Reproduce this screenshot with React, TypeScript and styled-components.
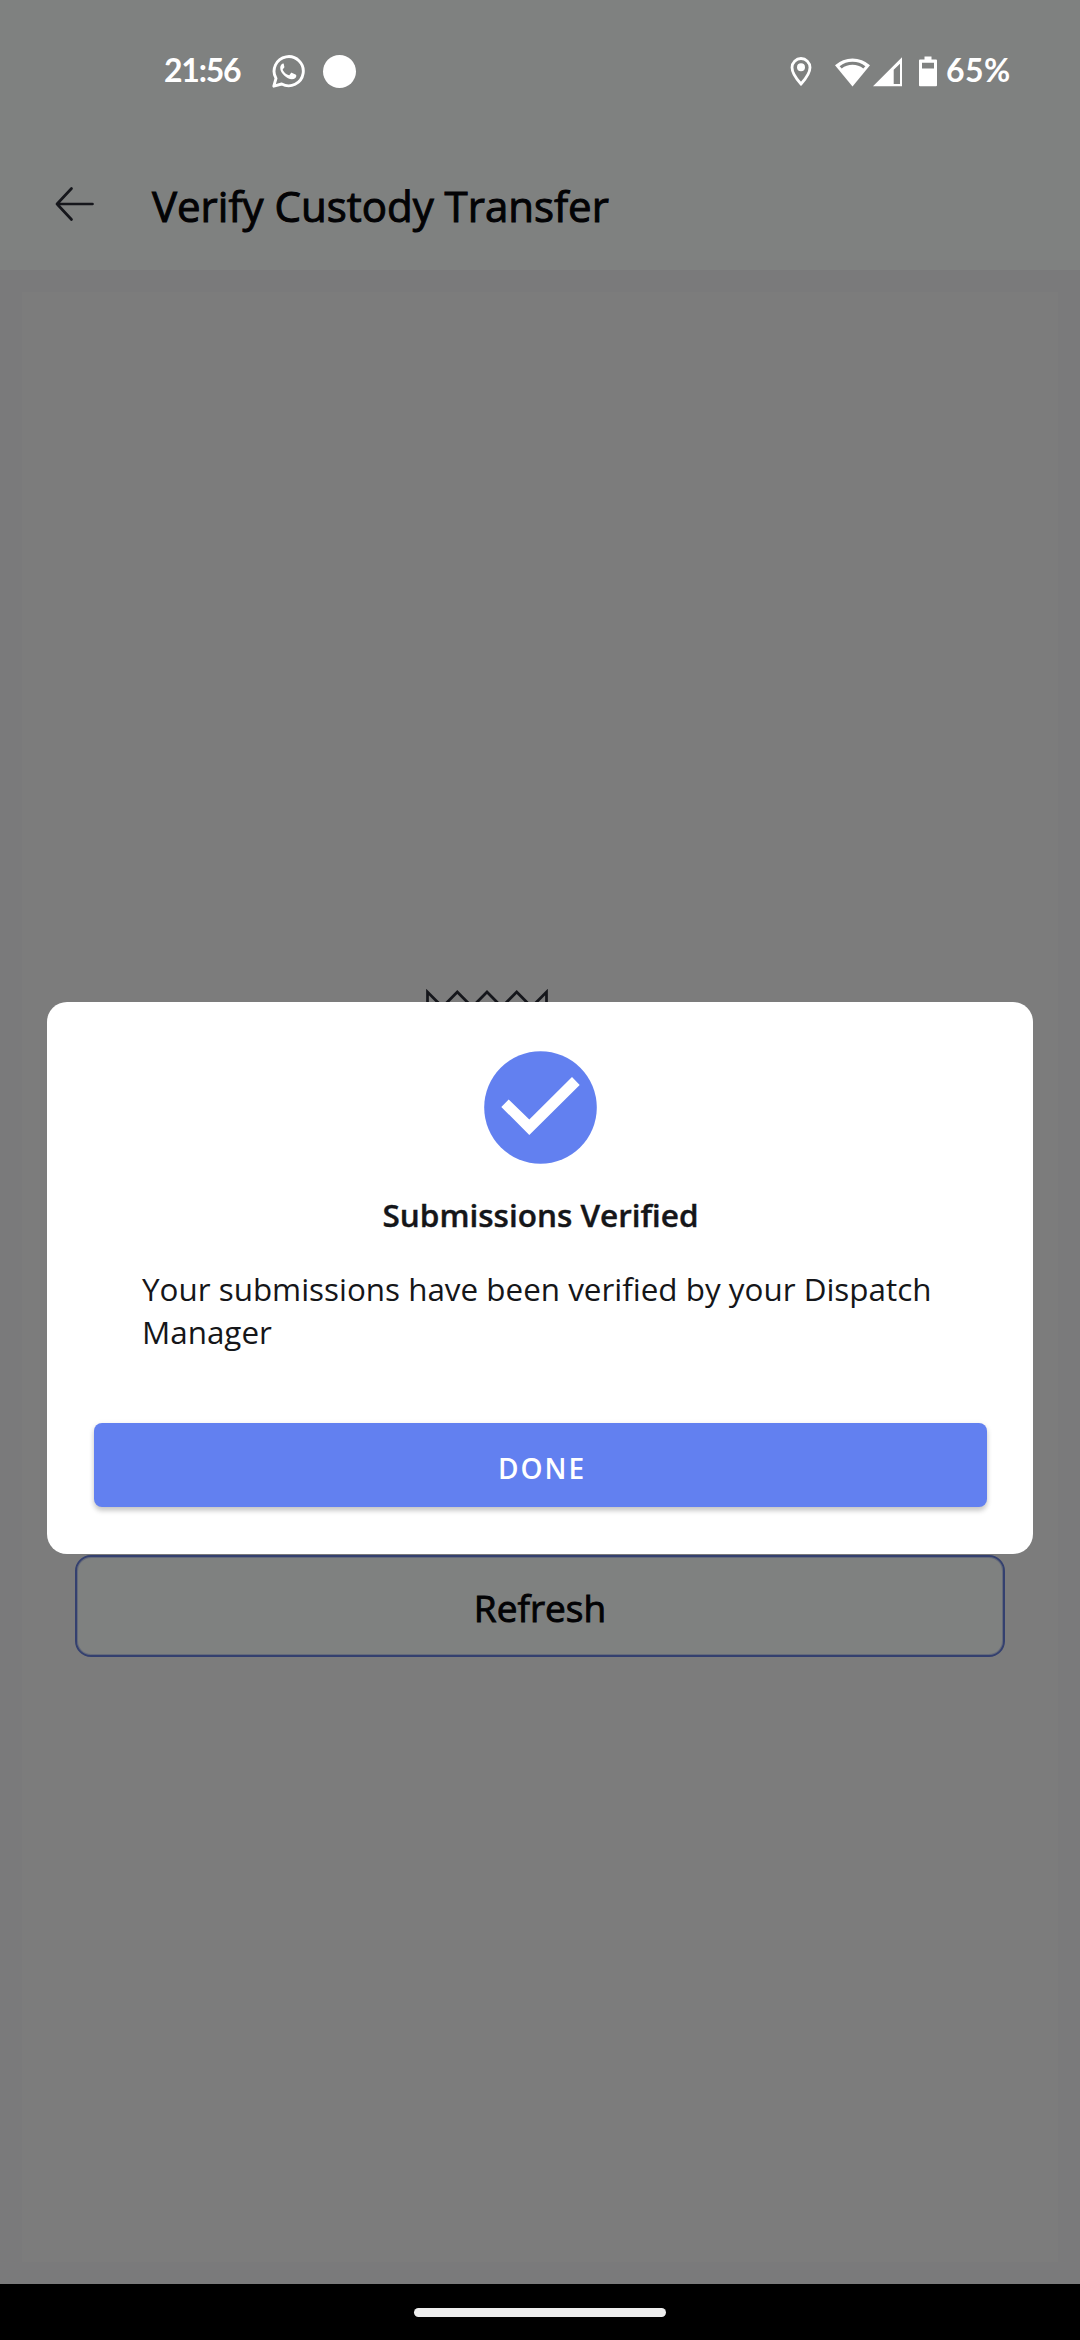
import React from "react";
import styled, { createGlobalStyle } from "styled-components";

const GlobalStyle = createGlobalStyle`
  * { box-sizing: border-box; }
  body { margin: 0; background: #000; }
`;

const Screen = styled.div`
  position: relative;
  width: 1080px;
  height: 2340px;
  display: flex;
  flex-direction: column;
  overflow: hidden;
  background: #7f8180;
  font-family: "Open Sans", Roboto, sans-serif;
  color: #151619;
`;

const StatusBar = styled.div`
  height: 142px;
  display: flex;
  justify-content: space-between;
  align-items: center;
  padding: 0 68px 0 164px;
`;

const StatusGroup = styled.div<{ $gap: number }>`
  display: flex;
  align-items: center;
  gap: ${(p) => p.$gap}px;
  color: #fff;
  svg { display: block; }
`;

const StatusText = styled.span<{ $spacing: number; $width: number; $inset?: number }>`
  width: ${(p) => p.$width}px;
  padding: 0 0 2px ${(p) => p.$inset ?? 0}px;
  font-family: Lato, sans-serif;
  font-weight: 700;
  font-size: 32px;
  line-height: 36px;
  letter-spacing: ${(p) => p.$spacing}px;
  white-space: nowrap;
`;

const Dot = styled.span`
  width: 33px;
  height: 33px;
  border-radius: 50%;
  background: #fff;
`;

const Header = styled.header`
  height: 128px;
  display: flex;
  align-items: flex-start;
  padding: 37px 56px 0 55px;
  gap: 57px;
`;

const BackIcon = styled.svg`
  margin-top: 7px;
  flex: none;
`;

const Title = styled.h1`
  margin: 0;
  font-size: 42px;
  line-height: 53px;
  font-weight: 400;
  -webkit-text-stroke: 1px #030305;
  color: #030305;
  white-space: nowrap;
`;

const Body = styled.main`
  flex: 1;
  border: 22px solid #7a7a7b;
  background: #7c7c7c;
  display: flex;
  flex-direction: column;
  padding: 697px 53px 0;
`;

const ReceiptIcon = styled.svg`
  display: block;
  margin-left: 350px;
`;

const RefreshButton = styled.button`
  margin-top: 406px;
  height: 102px;
  border: 2px solid #34406f;
  box-shadow: inset 0 0 0 1px rgba(52, 64, 111, 0.35);
  border-radius: 16px;
  background: #7f8180;
  font: 400 37px/48px "Open Sans", Roboto, sans-serif;
  -webkit-text-stroke: 0.9px #030305;
  color: #030305;
  padding: 4px 0 0;
`;

const NavBar = styled.div`
  height: 56px;
  background: #000;
  display: flex;
  justify-content: center;
  align-items: center;
`;

const Pill = styled.span`
  width: 252px;
  height: 9px;
  border-radius: 5px;
  background: #eeeeee;
`;

const Overlay = styled.div`
  position: absolute;
  inset: 0 0 56px;
  display: flex;
  align-items: flex-start;
  padding: 1002px 47px 0;
`;

const Dialog = styled.section`
  flex: 1;
  height: 552px;
  border-radius: 20px;
  background: #fff;
  display: flex;
  flex-direction: column;
  align-items: center;
  padding: 49px 46px 47px 47px;
`;

const DialogTitle = styled.h2`
  margin: 30px 0 0;
  font-size: 31.5px;
  line-height: 42px;
  font-weight: 600;
  -webkit-text-stroke: 0.4px #151619;
  white-space: nowrap;
`;

const DialogText = styled.p`
  margin: 31px 0 0;
  align-self: stretch;
  padding: 0 0 0 48px;
  font-size: 31.4px;
  line-height: 43px;
  white-space: pre;
`;

const DoneButton = styled.button`
  margin-top: auto;
  align-self: stretch;
  height: 84px;
  border: 0;
  border-radius: 8px;
  background: #6280f0;
  box-shadow: 0 4px 5px rgba(0, 0, 0, 0.18), 0 1px 6px rgba(0, 0, 0, 0.08);
  color: #fff;
  font: 600 28px/36px "Open Sans", Roboto, sans-serif;
  letter-spacing: 2px;
  padding: 5px 0 0 3px;
`;

export default function App() {
  return (
    <>
      <GlobalStyle />
      <Screen>
        <StatusBar>
          <StatusGroup $gap={18}>
            <StatusText $width={90} $spacing={-1.2}>21:56</StatusText>
            <svg width="33" height="33" viewBox="0 0 33 33" fill="none">
              <path d="M1.8 31.2 4 23.4A14.6 14.6 0 1 1 9.7 29Z" stroke="#fff" strokeWidth="2.9" strokeLinejoin="round" />
              <path d="M11.4 9c-1.500 0-3.200 1.600-3.200 4.300C8.200 19 15 24.700 19.900 24.700c2.600 0 4.400-1.700 4.400-3.300 0-.8-.2-1.100-.8-1.400l-3.300-1.600c-.6-.3-1-.2-1.400.3l-1.300 1.700c-.3.400-.7.400-1.200.200-2.300-1-4.200-2.700-5.400-4.900-.3-.5-.2-.9.100-1.200l1.100-1.300c.3-.4.400-.8.200-1.300L11.700 9.300c-.1-.2-.2-.3-.3-.3Z" fill="#fff" transform="translate(0 -.5)" />
            </svg>
            <Dot />
          </StatusGroup>
          <StatusGroup $gap={0}>
            <svg width="147" height="31" viewBox="0 0 147 31">
              <path d="M11 2.500A9 9 0 0 0 2 11.500C2 18 11 28 11 28S20 18 20 11.500A9 9 0 0 0 11 2.500Z" fill="none" stroke="#fff" strokeWidth="2.8" />
              <circle cx="11" cy="11.300" r="4" fill="#fff" />
              <path d="M45 9.200A26 26 0 0 1 80 9.200L62.500 30.500Z" fill="#fff" />
              <path d="M49.600 10.200A21 21 0 0 1 75.400 10.200L73.300 12.600A17.500 17.500 0 0 0 51.700 12.600Z" fill="#7f8180" />
              <path d="M112 1.200V30.200H83ZM103.700 13.800V28H110V7.800Z" fill="#fff" fillRule="evenodd" />
              <path d="M134.500.5h7v3H146a1 1 0 0 1 1 1V29.200a1 1 0 0 1-1 1H130a1 1 0 0 1-1-1V4.500a1 1 0 0 1 1-1h4.500ZM132 6.700V12.500h12V6.700Z" fill="#fff" fillRule="evenodd" />
            </svg>
            <StatusText $width={75} $spacing={0.5} $inset={9}>65%</StatusText>
          </StatusGroup>
        </StatusBar>
        <Header>
          <BackIcon width="40" height="36" viewBox="0 0 40 36" fill="none" stroke="#15161b" strokeWidth="2.7" strokeLinecap="round" strokeLinejoin="round">
            <path d="M16.500 2.500 2 18l14.500 15.500M2 18h35.500" />
          </BackIcon>
          <Title>Verify Custody Transfer</Title>
        </Header>
        <Body>
          <ReceiptIcon width="124" height="160" viewBox="0 0 124 160" fill="none" stroke="#15161b" strokeWidth="2.700">
            <path d="M2.500 158V3L17.500 18 32.300 3 47.200 18 62 3 76.800 18 91.700 3 106.600 18 121.500 3V158Z" />
          </ReceiptIcon>
          <RefreshButton>Refresh</RefreshButton>
        </Body>
        <NavBar>
          <Pill />
        </NavBar>
        <Overlay>
          <Dialog>
            <svg width="113" height="113" viewBox="0 0 113 113">
              <circle cx="56.500" cy="56.500" r="56.300" fill="#6280f0" />
              <path d="M17.300 55.900 24.700 48.600 45.300 68.600 88 26 95.700 34 45.300 84Z" fill="#fff" />
            </svg>
            <DialogTitle>Submissions Verified</DialogTitle>
            <DialogText>{"Your submissions have been verified by your Dispatch\nManager"}</DialogText>
            <DoneButton>DONE</DoneButton>
          </Dialog>
        </Overlay>
      </Screen>
    </>
  );
}
